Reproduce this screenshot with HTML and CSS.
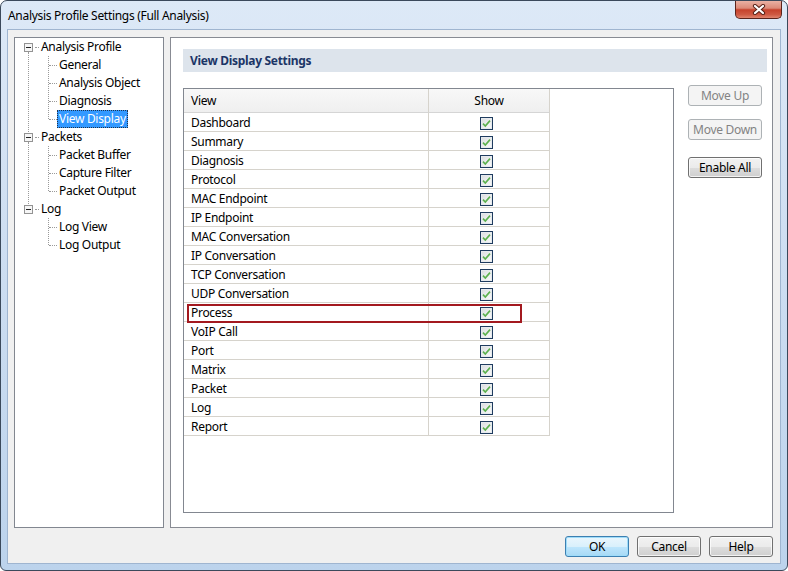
FILE: index.html
```html
<!DOCTYPE html>
<html lang="en">
<head>
<meta charset="utf-8">
<title>Analysis Profile Settings (Full Analysis)</title>
<link rel="stylesheet" href="styles.css">
</head>
<body>
<div class="window">
  <div class="titlebar">
    <span class="title">Analysis Profile Settings (Full Analysis)</span>
    <div class="close" aria-label="Close">
      <svg width="14" height="11" viewBox="0 0 14 11"><path d="M3 2 L11 9 M11 2 L3 9" stroke="#5a2218" stroke-width="4.2" stroke-linecap="round" fill="none"/><path d="M3 2 L11 9 M11 2 L3 9" stroke="#ffffff" stroke-width="2.2" stroke-linecap="round" fill="none"/></svg>
    </div>
  </div>
  <div class="client">
    <div class="panels">
      <div class="tree-panel">
        <ul class="tree">
          <li class="root">
            <div class="row"><span class="exp"><svg width="9" height="9" viewBox="0 0 9 9"><rect x="0.5" y="0.5" width="8" height="8" fill="#f6f6f6" stroke="#939393"/><path d="M2 4.5H7" stroke="#222"/></svg></span><span class="conn"></span><span class="label">Analysis Profile</span></div>
            <ul class="children">
              <li><div class="row"><span class="label">General</span></div></li>
              <li><div class="row"><span class="label">Analysis Object</span></div></li>
              <li><div class="row"><span class="label">Diagnosis</span></div></li>
              <li><div class="row"><span class="label selected">View Display</span></div></li>
            </ul>
          </li>
          <li class="root">
            <div class="row"><span class="exp"><svg width="9" height="9" viewBox="0 0 9 9"><rect x="0.5" y="0.5" width="8" height="8" fill="#f6f6f6" stroke="#939393"/><path d="M2 4.5H7" stroke="#222"/></svg></span><span class="conn"></span><span class="label">Packets</span></div>
            <ul class="children">
              <li><div class="row"><span class="label">Packet Buffer</span></div></li>
              <li><div class="row"><span class="label">Capture Filter</span></div></li>
              <li><div class="row"><span class="label">Packet Output</span></div></li>
            </ul>
          </li>
          <li class="root last">
            <div class="row"><span class="exp"><svg width="9" height="9" viewBox="0 0 9 9"><rect x="0.5" y="0.5" width="8" height="8" fill="#f6f6f6" stroke="#939393"/><path d="M2 4.5H7" stroke="#222"/></svg></span><span class="conn"></span><span class="label">Log</span></div>
            <ul class="children">
              <li><div class="row"><span class="label">Log View</span></div></li>
              <li><div class="row"><span class="label">Log Output</span></div></li>
            </ul>
          </li>
        </ul>
      </div>
      <div class="settings">
        <div class="section-header">View Display Settings</div>
        <div class="settings-body">
          <div class="list-box">
            <div class="grid">
              <div class="hcell">View</div><div class="hcell center">Show</div>
              <div class="cell">Dashboard</div><div class="cell chk"><span class="cb"></span></div>
              <div class="cell">Summary</div><div class="cell chk"><span class="cb"></span></div>
              <div class="cell">Diagnosis</div><div class="cell chk"><span class="cb"></span></div>
              <div class="cell">Protocol</div><div class="cell chk"><span class="cb"></span></div>
              <div class="cell">MAC Endpoint</div><div class="cell chk"><span class="cb"></span></div>
              <div class="cell">IP Endpoint</div><div class="cell chk"><span class="cb"></span></div>
              <div class="cell">MAC Conversation</div><div class="cell chk"><span class="cb"></span></div>
              <div class="cell">IP Conversation</div><div class="cell chk"><span class="cb"></span></div>
              <div class="cell">TCP Conversation</div><div class="cell chk"><span class="cb"></span></div>
              <div class="cell">UDP Conversation</div><div class="cell chk"><span class="cb"></span></div>
              <div class="cell">Process</div><div class="cell chk"><span class="cb"></span></div>
              <div class="cell">VoIP Call</div><div class="cell chk"><span class="cb"></span></div>
              <div class="cell">Port</div><div class="cell chk"><span class="cb"></span></div>
              <div class="cell">Matrix</div><div class="cell chk"><span class="cb"></span></div>
              <div class="cell">Packet</div><div class="cell chk"><span class="cb"></span></div>
              <div class="cell">Log</div><div class="cell chk"><span class="cb"></span></div>
              <div class="cell">Report</div><div class="cell chk"><span class="cb"></span></div>
            </div>
            <div class="highlight"></div>
          </div>
          <div class="side-buttons">
            <button class="btn disabled">Move Up</button>
            <button class="btn disabled">Move Down</button>
            <button class="btn">Enable All</button>
          </div>
        </div>
      </div>
    </div>
    <div class="footer">
      <button class="btn default">OK</button>
      <button class="btn">Cancel</button>
      <button class="btn">Help</button>
    </div>
  </div>
</div>
</body>
</html>
```

FILE: styles.css
```css
* { box-sizing: border-box; }
html, body { margin: 0; padding: 0; background: #ffffff; }
body {
  font-family: "Noto Sans", "Open Sans", sans-serif;
  font-size: 12px;
  letter-spacing: -0.3px;
  color: #000;
}

.window {
  width: 788px;
  height: 571px;
  border: 1px solid #3b495b;
  border-radius: 7px 7px 6px 6px;
  background: linear-gradient(180deg, #dde9f7 0%, #cfdff2 40%, #bcd3ec 100%);
  padding: 0 7px 7px;
  display: flex;
  flex-direction: column;
  overflow: hidden;
}

.titlebar {
  height: 29px;
  display: flex;
  justify-content: space-between;
  align-items: flex-start;
}
.title {
  padding-top: 7px;
  line-height: 15px;
  white-space: nowrap;
  color: #000;
}
.close {
  width: 47px;
  height: 18px;
  margin-right: -2px;
  border: 1px solid #5b241c;
  border-top: none;
  border-radius: 0 0 5px 5px;
  background: linear-gradient(180deg, #eab1a3 0%, #dc8a78 42%, #c6422c 52%, #cf5a43 80%, #e0846e 100%);
  display: flex;
  align-items: center;
  justify-content: center;
}

.client {
  flex: 1;
  background: #f0f0f0;
  box-shadow: 0 0 0 1px #9fb5d0;
  padding: 7px 7px 6px 6px;
  display: flex;
  flex-direction: column;
}

.panels {
  display: flex;
  gap: 6px;
  height: 491px;
}

.tree-panel {
  width: 150px;
  border: 1px solid #828790;
  background: #fff;
}

.tree, .children {
  list-style: none;
  margin: 0;
  padding: 0;
}
.tree li { position: relative; }
.row {
  height: 18px;
  display: flex;
  align-items: center;
  white-space: nowrap;
}
.root > .row { padding-left: 9px; }
.exp { width: 9px; height: 9px; display: block; }
.exp svg { display: block; }
.conn {
  width: 4px;
  margin-left: 2px;
  border-top: 1px dotted #9a9a9a;
}
.children > li > .row { padding-left: 42px; }
.label {
  padding: 0 2px;
  height: 18px;
  line-height: 18px;
}
.label.selected {
  background: #3399ff;
  color: #fff;
  outline: 1px dotted #20324a;
  outline-offset: -1px;
}
.root:not(.last)::before {
  content: "";
  position: absolute;
  left: 13px;
  top: 14px;
  bottom: -4px;
  border-left: 1px dotted #9a9a9a;
}
.children { position: relative; }
.children::before {
  content: "";
  position: absolute;
  left: 33px;
  top: 0;
  bottom: 9px;
  border-left: 1px dotted #9a9a9a;
}
.children > li::before {
  content: "";
  position: absolute;
  left: 34px;
  top: 9px;
  width: 8px;
  border-top: 1px dotted #9a9a9a;
}

.settings {
  flex: 1;
  border: 1px solid #888b93;
  background: #fff;
  padding: 11px 5px 0 12px;
}
.section-header {
  height: 23px;
  line-height: 23px;
  background: #dde4ec;
  color: #1b3566;
  font-weight: bold;
  padding-left: 7px;
}
.settings-body {
  display: flex;
  align-items: flex-start;
  gap: 14px;
  margin-top: 16px;
}
.list-box {
  width: 491px;
  height: 425px;
  border: 1px solid #828790;
  position: relative;
}
.grid {
  display: grid;
  grid-template-columns: 245px 121px;
  grid-template-rows: 24px;
  grid-auto-rows: 19px;
}
.hcell, .cell {
  border-right: 1px solid #d6d3cc;
  border-bottom: 1px solid #d6d3cc;
  display: flex;
  align-items: center;
  padding-left: 7px;
  white-space: nowrap;
}
.hcell {
  background: linear-gradient(180deg, #f8f8f8 0%, #efefef 100%);
  border-bottom-color: #d5d5d5;
  padding-bottom: 1px;
}
.hcell.center { justify-content: center; padding-left: 0; }
.cell { padding-top: 1px; }
.cell.chk { padding-left: 51px; padding-top: 0; }
.cb {
  width: 13px;
  height: 13px;
  margin-top: 3px;
  border: 1px solid #1f3c5f;
  background:
    url("data:image/svg+xml;utf8,<svg xmlns='http://www.w3.org/2000/svg' width='11' height='11' viewBox='0 0 11 11'><path d='M2 5.6 L4.3 8 L9 2.6' fill='none' stroke='%235cb14e' stroke-width='1.6'/></svg>") center / 11px 11px no-repeat,
    linear-gradient(135deg, #d9dcde 0%, #eef0f1 60%, #fafafa 100%);
  box-shadow: inset 0 0 0 1px #e6eaee;
}
.highlight {
  position: absolute;
  left: 3px;
  top: 215px;
  width: 335px;
  height: 19px;
  border: 2px solid #a3191f;
}

.side-buttons {
  width: 74px;
  display: flex;
  flex-direction: column;
  margin-top: -3px;
}
.side-buttons .btn { width: 74px; }
.side-buttons .btn:nth-child(1) { margin-bottom: 13px; }
.side-buttons .btn:nth-child(2) { margin-bottom: 17px; }

.btn {
  height: 21px;
  font: inherit;
  letter-spacing: inherit;
  color: #000;
  border: 1px solid #707070;
  border-radius: 3px;
  background: linear-gradient(180deg, #f2f2f2 0%, #ebebeb 50%, #dddddd 51%, #cfcfcf 100%);
  box-shadow: inset 0 0 0 1px rgba(255, 255, 255, 0.75);
  padding: 0;
  line-height: 18px;
}
.btn.disabled {
  border-color: #adb2b5;
  background: #f4f4f4;
  color: #838383;
  box-shadow: none;
}
.btn.default {
  border-color: #3c7fb1;
  background: linear-gradient(180deg, #eaf6fd 0%, #d9f0fc 50%, #bee6fd 51%, #a7d9f5 100%);
  box-shadow: inset 0 0 0 1px #9fdcf9;
}

.footer {
  display: flex;
  justify-content: flex-end;
  gap: 8px;
  margin-top: 8px;
}
.footer .btn { width: 64px; }
```
